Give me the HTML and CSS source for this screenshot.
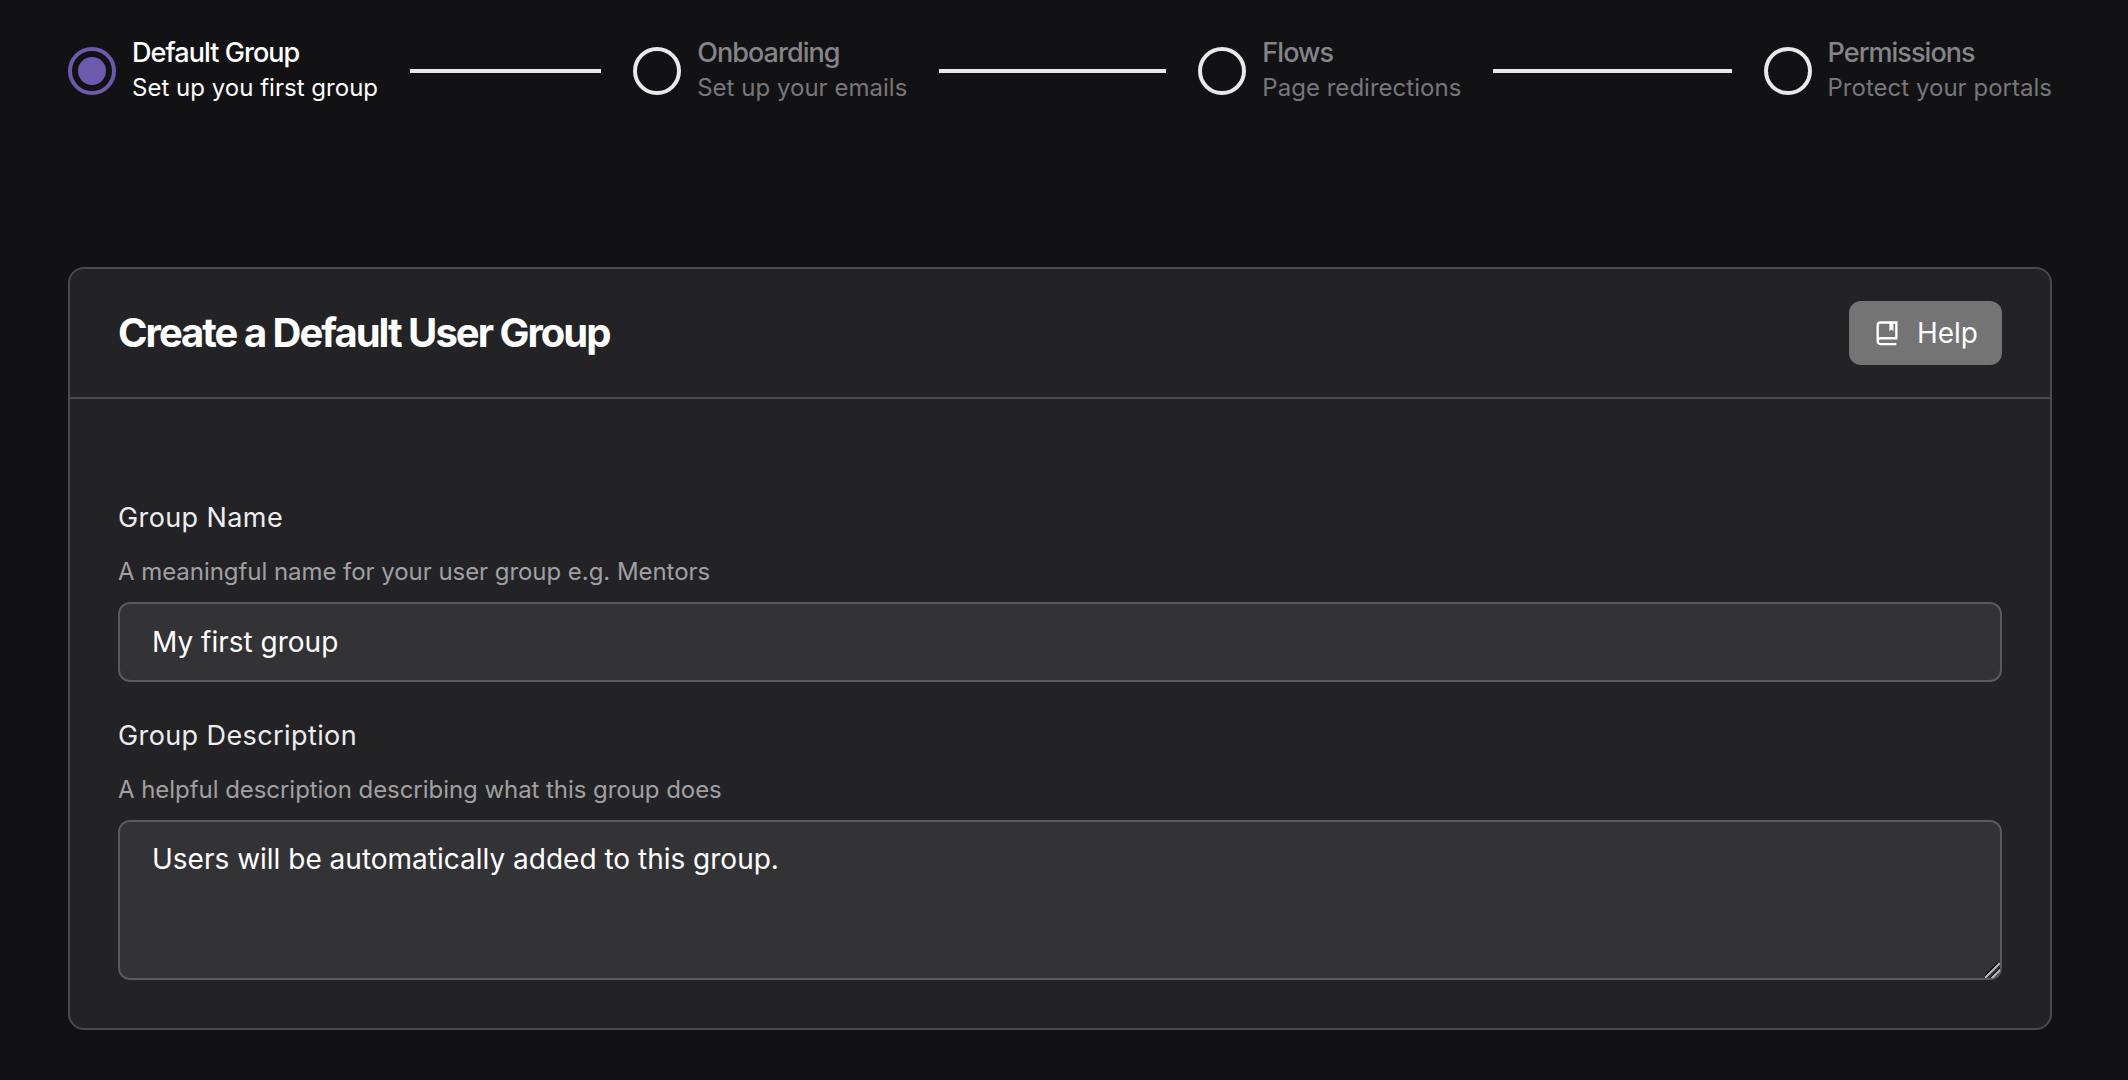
FILE: index.html
```html
<!DOCTYPE html>
<html lang="en">
<head>
  <meta charset="UTF-8" />
  <title>Default Group Setup</title>
  <link rel="stylesheet" href="styles.css">
</head>
<body>
  <nav class="stepper">
    <div class="step-cell">
      <div class="step active">
        <span class="step-circle"><span class="step-dot"></span></span>
        <div class="step-text">
          <div class="step-title">Default Group</div>
          <div class="step-sub">Set up you first group</div>
        </div>
      </div>
      <div class="step-line"></div>
    </div>
    <div class="step-cell">
      <div class="step">
        <span class="step-circle"></span>
        <div class="step-text">
          <div class="step-title">Onboarding</div>
          <div class="step-sub">Set up your emails</div>
        </div>
      </div>
      <div class="step-line"></div>
    </div>
    <div class="step-cell">
      <div class="step">
        <span class="step-circle"></span>
        <div class="step-text">
          <div class="step-title">Flows</div>
          <div class="step-sub">Page redirections</div>
        </div>
      </div>
      <div class="step-line"></div>
    </div>
    <div class="step">
      <span class="step-circle"></span>
      <div class="step-text">
        <div class="step-title">Permissions</div>
        <div class="step-sub">Protect your portals</div>
      </div>
    </div>
  </nav>

  <section class="card">
    <header class="card-header">
      <h1>Create a Default User Group</h1>
      <button type="button" class="help-btn">
        <svg class="help-icon" viewBox="0 0 24 24" fill="none" stroke="currentColor" stroke-width="2">
          <path d="M4 19V5.5A2.5 2.5 0 0 1 6.5 3H20v13.5H6.5A2.5 2.5 0 0 0 4 19a2.5 2.5 0 0 0 2.5 2.5H20" />
          <path d="M14 3h3.5v7.5L15.75 9 14 10.5z" fill="currentColor" stroke="none" />
        </svg>
        Help
      </button>
    </header>
    <form class="card-body">
      <div class="field">
        <label for="groupName">Group Name</label>
        <p class="hint">A meaningful name for your user group e.g. Mentors</p>
        <input type="text" id="groupName" value="My first group" />
      </div>
      <div class="field">
        <label for="groupDesc">Group Description</label>
        <p class="hint">A helpful description describing what this group does</p>
        <textarea id="groupDesc">Users will be automatically added to this group.</textarea>
      </div>
    </form>
  </section>
</body>
</html>
```

FILE: styles.css
```css
body {
  font-family: Inter, "Noto Sans", sans-serif;
  background: #121214;
  color: #fff;
  margin: 0;
  padding: 33px 76px 0 68px;
}
.stepper {
  display: flex;
  align-items: center;
  height: 76px;
}
.step-cell {
  flex: 1;
  display: flex;
  align-items: center;
}
.step {
  display: flex;
  align-items: center;
  gap: 16px;
}
.step-circle {
  box-sizing: border-box;
  width: 48px;
  height: 48px;
  border: 4px solid #e9e9ec;
  border-radius: 50%;
  display: flex;
  align-items: center;
  justify-content: center;
}
.step.active .step-circle {
  border-color: #6b5aad;
}
.step-dot {
  width: 28px;
  height: 28px;
  border-radius: 50%;
  background: #6b5aad;
}
.step-text {
  padding-bottom: 4px;
}
.step-title {
  font-size: 27px;
  font-weight: 500;
  letter-spacing: -0.035em;
  line-height: 37px;
  color: #858588;
}
.step-sub {
  font-size: 24px;
  line-height: 34px;
  letter-spacing: 0.02px;
  color: #77777a;
}
.step.active .step-title,
.step.active .step-sub {
  color: #fff;
}
.step-line {
  flex: 1;
  height: 4px;
  margin: 0 32px;
  background: #e9e9ec;
}
.card {
  margin-top: 158px;
  background: #232325;
  border: 2px solid #4a4a4d;
  border-radius: 16px;
}
.card-header {
  display: flex;
  align-items: center;
  justify-content: space-between;
  height: 128px;
  padding: 0 48px;
  border-bottom: 2px solid #4a4a4d;
}
h1 {
  margin: 0 0 2px;
  font-size: 40px;
  font-weight: 700;
  letter-spacing: -0.05em;
}
.help-btn {
  display: flex;
  align-items: center;
  gap: 16px;
  height: 64px;
  padding: 0 24px;
  font-family: inherit;
  font-size: 28px;
  color: #fff;
  background: #747474;
  border: none;
  border-radius: 12px;
}
.help-icon {
  width: 28px;
  height: 28px;
}
.card-body {
  padding: 100px 48px 48px;
}
.field {
  margin-bottom: 35px;
}
.field:last-child {
  margin-bottom: 0;
}
label {
  display: block;
  font-size: 27px;
  line-height: 38px;
  letter-spacing: 0.4px;
  color: #ededf0;
}
.hint {
  margin: 18px 0 13px;
  font-size: 24px;
  line-height: 34px;
  letter-spacing: -0.05px;
  color: #a0a0a3;
}
input,
textarea {
  display: block;
  box-sizing: border-box;
  width: 100%;
  font-family: inherit;
  font-size: 28px;
  color: #fff;
  background: #333336;
  border: 2px solid #5a5a5d;
  border-radius: 12px;
  padding: 0 32px;
}
input {
  height: 80px;
}
textarea {
  height: 160px;
  padding-top: 17px;
  line-height: 40px;
}
textarea::-webkit-resizer {
  background: linear-gradient(135deg,
    transparent 40%, #111 40%, #111 46%, #b0b0b0 46%, #b0b0b0 56%,
    transparent 56%, transparent 66%, #111 66%, #111 70%, #b0b0b0 70%, #b0b0b0 80%,
    transparent 80%);
}
```
